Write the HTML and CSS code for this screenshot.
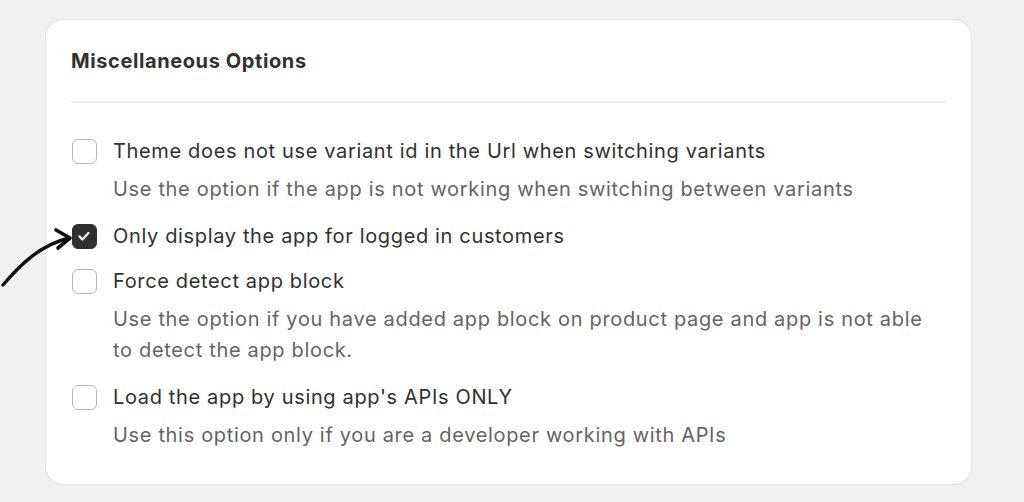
FILE: index.html
```html
<!DOCTYPE html>
<html>
<head>
<meta charset="utf-8">
<link rel="stylesheet" href="styles.css">
</head>
<body>
<div class="page">
  <div class="card">
    <h2 class="title">Miscellaneous Options</h2>
    <div class="divider"></div>
    <div class="options">
      <div class="option">
        <span class="box"></span>
        <div class="text">
          <div class="label">Theme does not use variant id in the Url when switching variants</div>
          <div class="desc">Use the option if the app is not working when switching between variants</div>
        </div>
      </div>
      <div class="option">
        <span class="box checked">
          <svg viewBox="0 0 24 24" width="24" height="24"><path d="M7.4 12.4l3 3 6.1-6.4" fill="none" stroke="#fff" stroke-width="2.2" stroke-linecap="round" stroke-linejoin="round"/></svg>
        </span>
        <div class="text">
          <div class="label">Only display the app for logged in customers</div>
        </div>
      </div>
      <div class="option">
        <span class="box"></span>
        <div class="text">
          <div class="label">Force detect app block</div>
          <div class="desc">Use the option if you have added app block on product page and app is not able to detect the app block.</div>
        </div>
      </div>
      <div class="option">
        <span class="box"></span>
        <div class="text">
          <div class="label">Load the app by using app's APIs ONLY</div>
          <div class="desc">Use this option only if you are a developer working with APIs</div>
        </div>
      </div>
    </div>
  </div>
  <svg class="arrow" viewBox="0 0 80 70" width="80" height="70">
    <path d="M3 60 C 20 40, 40 20, 69 13" fill="none" stroke="#111" stroke-width="3.4" stroke-linecap="round"/>
    <path d="M56 5 L 70 13 L 58 23" fill="none" stroke="#111" stroke-width="3.6" stroke-linecap="round" stroke-linejoin="round"/>
  </svg>
</div>
</body>
</html>
```
FILE: styles.css
```css
* { box-sizing: border-box; }
html, body { margin: 0; padding: 0; }
body {
  background: #f1f1f1;
  font-family: Inter, "Noto Sans", sans-serif;
  width: 1024px;
  height: 502px;
  overflow: hidden;
}
.page {
  position: relative;
  padding: 20px 53px 0 46px;
}
.card {
  background: #fff;
  border-radius: 17px;
  box-shadow: 0 0 0 1px #e4e4e4, 0 1px 1px rgba(0,0,0,0.08);
  width: 925px;
  height: 464px;
  padding: 27px 25px 0 25px;
}
.title {
  margin: 0;
  font-size: 20px;
  font-weight: 700;
  letter-spacing: 0.6px;
  line-height: 28px;
  color: #303030;
}
.divider {
  margin-top: 26px;
  height: 2px;
  background: #f0f0f0;
}
.options {
  margin-top: 34px;
  display: flex;
  flex-direction: column;
  gap: 17px;
}
.option {
  display: flex;
  align-items: flex-start;
  gap: 16px;
}
.box {
  flex: none;
  width: 25px;
  height: 25px;
  margin: 2px 0 0 1px;
  border: 1.5px solid #b5b5b5;
  border-radius: 6px;
  background: #fff;
  display: flex;
}
.box.checked {
  background: #303030;
  border-color: #303030;
}
.box.checked svg { margin: -1.5px; }
.label {
  font-size: 20px;
  letter-spacing: 0.65px;
  line-height: 28px;
  color: #303030;
}
.desc {
  margin-top: 9px;
  font-size: 20px;
  letter-spacing: 0.67px;
  line-height: 31px;
  color: #646464;
  width: 825px;
}
.arrow {
  position: absolute;
  left: 0;
  top: 225px;
}
```
